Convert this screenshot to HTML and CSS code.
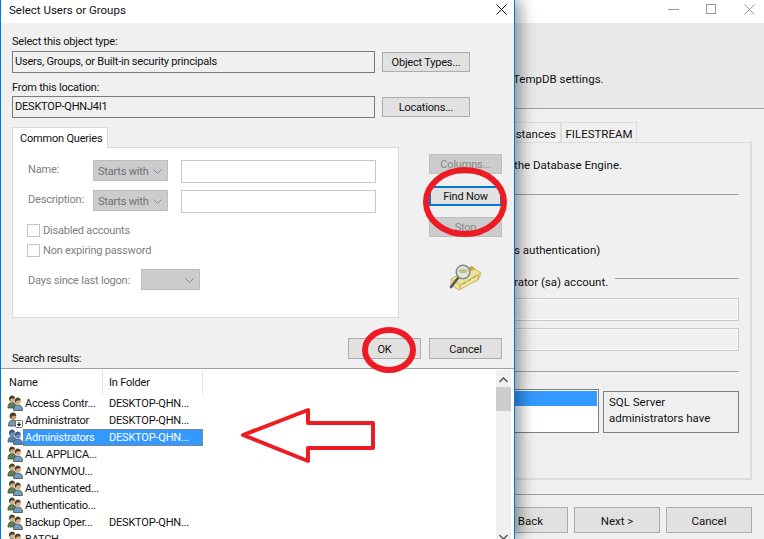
FILE: index.html
```html
<!DOCTYPE html>
<html lang="en">
<head>
    <meta charset="UTF-8">
    <meta name="viewport" content="width=device-width, initial-scale=1.0">
    <title>Select Users or Groups</title>
    <link rel="stylesheet" href="styles.css">
</head>
<body>

<svg class="defs" width="0" height="0">
    <symbol id="group" viewBox="0 0 16 16">
        <path d="M1 13c0-4 1.500-5.500 4-5.500s4 1.500 4 5.500z" fill="var(--back)" stroke="var(--line)" stroke-width=".8"/>
        <circle cx="5" cy="4.500" r="3" fill="var(--skin)"/>
        <path d="M2 4.500c0-3 1.500-4 3-4s3 1 3 3c-2 0-4 0-4.500 .5l-.5 2z" fill="var(--hair)"/>
        <path d="M6.500 15.500c0-4 1.500-5.500 4.300-5.500s4.700 1.500 4.700 5.500z" fill="var(--front)" stroke="var(--line)" stroke-width=".8"/>
        <circle cx="10.800" cy="6.500" r="3" fill="var(--skin)"/>
        <path d="M7.800 6.500c0-3 1.500-4 3-4s3 1 3 3c-2-.5-3.500 0-4.500 .5l-.5 2z" fill="var(--hair)"/>
    </symbol>
    <symbol id="user" viewBox="0 0 16 16">
        <path d="M1.500 14c0-4.500 2-6 4.500-6s4.500 1.500 4.500 6z" fill="#7d94ab" stroke="#3d4a58" stroke-width=".8"/>
        <circle cx="6" cy="4.500" r="3.300" fill="#c9986a"/>
        <path d="M2.700 5c0-3.500 1.700-4.500 3.300-4.500s3.300 1 3.300 3.500c-2-.5-3.500-.5-4.500 0l-.5 2.500z" fill="#4a3524"/>
        <rect x="8.500" y="8.500" width="7" height="7" rx="1" fill="#fff" stroke="#555" stroke-width=".8"/>
        <path d="M12 10v3.500M10.300 12l1.700 1.700 1.700-1.700" fill="none" stroke="#222" stroke-width="1.100"/>
    </symbol>
</svg>

<div class="screen">

    <!-- wizard window behind the dialog -->
    <div class="wizard">
        <div class="wizard-title">
            <svg class="win-ctl" width="11" height="11" viewBox="0 0 11 11"><path d="M0 5.500h11" stroke="#999"/></svg>
            <svg class="win-ctl" width="11" height="11" viewBox="0 0 11 11"><rect x=".5" y=".5" width="9" height="9" fill="none" stroke="#999"/></svg>
            <svg class="win-ctl" width="11" height="11" viewBox="0 0 11 11"><path d="M.5 .5l10 10M10.500 .5l-10 10" stroke="#999"/></svg>
        </div>
        <div class="wizard-head">TempDB settings.</div>
        <div class="wizard-main">
            <div class="wizard-tabs">
                <span class="wizard-tab tab-clipped">Instances</span>
                <span class="wizard-tab tab-stream">FILESTREAM</span>
            </div>
            <div class="wizard-panel">
                <p class="engine-text">the Database Engine.</p>
                <div class="rule rule-first"></div>
                <p class="auth-text">s authentication)</p>
                <div class="sa-line"><span>rator (sa) account.</span><div class="rule"></div></div>
                <div class="pw-box"></div>
                <div class="pw-box"></div>
                <div class="rule rule-admins"></div>
                <div class="admins">
                    <div class="admin-list"><div class="admin-selected"></div></div>
                    <div class="admin-note">SQL Server administrators have</div>
                </div>
            </div>
        </div>
        <div class="wizard-foot">
            <button class="btn wizard-btn back-btn">Back</button>
            <button class="btn wizard-btn">Next &gt;</button>
            <button class="btn wizard-btn">Cancel</button>
        </div>
    </div>

    <!-- the dialog -->
    <div class="dialog">
        <div class="dialog-title">
            <span>Select Users or Groups</span>
            <svg width="11" height="11" viewBox="0 0 11 11"><path d="M.5 .5l10 10M10.500 .5l-10 10" stroke="#111"/></svg>
        </div>

        <div class="dialog-body">
            <div class="caption">Select this object type:</div>
            <div class="field-row">
                <div class="field">Users, Groups, or Built-in security principals</div>
                <button class="btn field-btn">Object Types...</button>
            </div>
            <div class="caption caption-second">From this location:</div>
            <div class="field-row field-row-second">
                <div class="field">DESKTOP-QHNJ4I1</div>
                <button class="btn field-btn">Locations...</button>
            </div>

            <div class="queries">
                <div class="queries-left">
                    <div class="tab">Common Queries</div>
                    <div class="panel">
                        <div class="query-row">
                            <span class="query-label">Name:</span>
                            <div class="fake-select"><span>Starts with</span><svg class="chev" width="9" height="5" viewBox="0 0 9 5"><path d="M.5 .5l4 4 4-4" fill="none" stroke="#888"/></svg></div>
                            <div class="query-input"></div>
                        </div>
                        <div class="query-row query-row-second">
                            <span class="query-label">Description:</span>
                            <div class="fake-select"><span>Starts with</span><svg class="chev" width="9" height="5" viewBox="0 0 9 5"><path d="M.5 .5l4 4 4-4" fill="none" stroke="#888"/></svg></div>
                            <div class="query-input"></div>
                        </div>
                        <div class="check-row check-first"><span class="check"></span>Disabled accounts</div>
                        <div class="check-row"><span class="check"></span>Non expiring password</div>
                        <div class="days-row">
                            <span class="days-label">Days since last logon:</span>
                            <div class="fake-select days-select"><span></span><svg class="chev" width="9" height="5" viewBox="0 0 9 5"><path d="M.5 .5l4 4 4-4" fill="none" stroke="#888"/></svg></div>
                        </div>
                    </div>
                </div>
                <div class="queries-side">
                    <button class="btn side-btn btn-off">Columns...</button>
                    <button class="btn side-btn btn-focus">Find Now</button>
                    <button class="btn side-btn btn-off">Stop</button>
                    <svg class="find-icon" width="33" height="28" viewBox="0 0 33 28">
                        <path d="M2 15L23 3l9 6-3 7L10 26 2 21z" fill="#efe39a" stroke="#b5a862" stroke-width=".8"/>
                        <path d="M2 15l9 6 21-12" fill="none" stroke="#c9bb72"/>
                        <path d="M11 21v5M29 11v5" stroke="#b5a862"/>
                        <path d="M14 20l3-2M19 17l3-2M24 14l3-2" stroke="#9c8f50"/>
                        <path d="M18 4l5-2 3 3-6 3z" fill="#c9a73c"/>
                        <path d="M9 14L2 23" stroke="#555" stroke-width="2.600" stroke-linecap="round"/>
                        <circle cx="14" cy="8" r="6.800" fill="#dfe7dc" stroke="#7d8c99" stroke-width="1.500"/>
                        <path d="M9 7c3-3 7-3 10 0-2 3-7 3-10 0z" fill="#c5bd8b"/>
                    </svg>
                </div>
            </div>

            <div class="dialog-foot">
                <span class="results-label">Search results:</span>
                <div class="foot-btns">
                    <button class="btn side-btn foot-btn">OK</button>
                    <button class="btn side-btn foot-btn">Cancel</button>
                </div>
            </div>
        </div>

        <div class="results">
            <div class="results-table">
                <div class="col-heads">
                    <span class="col-head col-name">Name</span>
                    <span class="col-head col-folder">In Folder</span>
                </div>
                <div class="row"><svg class="icon"><use href="#group"/></svg><div class="cells"><span class="name">Access Contr...</span><span>DESKTOP-QHN...</span></div></div>
                <div class="row"><svg class="icon"><use href="#user"/></svg><div class="cells"><span class="name">Administrator</span><span>DESKTOP-QHN...</span></div></div>
                <div class="row row-selected"><svg class="icon"><use href="#group"/></svg><div class="cells"><span class="name">Administrators</span><span>DESKTOP-QHN...</span></div></div>
                <div class="row"><svg class="icon"><use href="#group"/></svg><div class="cells"><span class="name">ALL APPLICA...</span></div></div>
                <div class="row"><svg class="icon"><use href="#group"/></svg><div class="cells"><span class="name">ANONYMOU...</span></div></div>
                <div class="row"><svg class="icon"><use href="#group"/></svg><div class="cells"><span class="name">Authenticated...</span></div></div>
                <div class="row"><svg class="icon"><use href="#group"/></svg><div class="cells"><span class="name">Authenticatio...</span></div></div>
                <div class="row"><svg class="icon"><use href="#group"/></svg><div class="cells"><span class="name">Backup Oper...</span><span>DESKTOP-QHN...</span></div></div>
                <div class="row"><svg class="icon"><use href="#group"/></svg><div class="cells"><span class="name">BATCH</span></div></div>
            </div>
            <div class="scrollbar">
                <svg class="scroll-arrow" width="9" height="6" viewBox="0 0 9 6"><path d="M.5 5l4-4 4 4" fill="none" stroke="#555" stroke-width="1.500"/></svg>
                <div class="scroll-thumb"></div>
                <svg class="scroll-arrow scroll-down" width="9" height="6" viewBox="0 0 9 6"><path d="M.5 1l4 4 4-4" fill="none" stroke="#555" stroke-width="1.500"/></svg>
            </div>
        </div>
    </div>

    <!-- red marks drawn over the screenshot -->
    <svg class="marks" width="764" height="539" viewBox="0 0 764 539">
        <ellipse cx="465" cy="202" rx="39" ry="32" />
        <ellipse cx="389" cy="350" rx="24" ry="20" />
        <path class="arrow" d="M243 435L308 410v13h65v25h-65v13z" />
    </svg>
</div>

</body>
</html>
```

FILE: styles.css
```css
* {
    box-sizing: border-box;
}
html, body {
    margin: 0;
    padding: 0;
    background: #f0f0f0;
}
body {
    font-family: Roboto, "Open Sans", sans-serif;
    font-size: 11px;
    letter-spacing: -0.2px;
    color: #111;
}
.defs {
    position: absolute;
}
.screen {
    position: relative;
    width: 764px;
    height: 539px;
    overflow: hidden;
}
p {
    margin: 0;
}

/* shared button */
.btn {
    display: block;
    padding: 1px 0 0;
    font-family: inherit;
    font-size: 11px;
    letter-spacing: inherit;
    color: #111;
    background: #e1e1e1;
    border: 1px solid #adadad;
}
.btn-off {
    background: #cccccc;
    color: #8a8a8a;
    border-color: #bfbfbf;
}
.btn-focus {
    border: 2px solid #0078d7;
}

/* wizard behind */
.wizard {
    position: absolute;
    left: 500px;
    top: 0;
    width: 264px;
    height: 539px;
    background: #f0f0f0;
    font-size: 11.5px;
    letter-spacing: 0;
    display: flex;
    flex-direction: column;
}
.wizard-title {
    height: 23px;
    background: #fff;
    display: flex;
    justify-content: flex-end;
    align-items: flex-start;
    padding: 4px 9px 0 0;
    gap: 27px;
}
.wizard-head {
    height: 86px;
    background: #e9e9e9;
    border-bottom: 1px solid #a0a0a0;
    padding: 49px 0 0 13px;
    line-height: 15px;
}
.wizard-main {
    padding: 13px 12px 0 0;
    height: 386px;
    border-bottom: 1px solid #a0a0a0;
}
.wizard-tabs {
    display: flex;
    height: 20px;
}
.wizard-tab {
    display: flex;
    align-items: center;
    padding: 2px 4px 0;
    border: 1px solid #dcdcdc;
    border-bottom: none;
}
.tab-clipped {
    width: 61px;
    justify-content: flex-end;
}
.tab-stream {
    width: 76px;
    justify-content: center;
}
.wizard-panel {
    height: 338px;
    border: 1px solid #dcdcdc;
    border-right-width: 2px;
    border-bottom-width: 2px;
    padding: 15px 11px 0 13px;
}
.engine-text {
    line-height: 15px;
}
.rule {
    border-top: 1px solid #a0a0a0;
    flex: 1;
}
.rule-first {
    margin-top: 21px;
}
.auth-text {
    margin-top: 48px;
    line-height: 15px;
}
.sa-line {
    display: flex;
    align-items: center;
    gap: 7px;
    margin-top: 16px;
    height: 15px;
}
.sa-line .rule {
    margin-top: -6px;
}
.pw-box {
    height: 23px;
    margin-top: 7px;
    margin-left: -13px;
    border: 1px solid #cacaca;
    box-shadow: inset 0 0 0 1px #fafafa;
}
.sa-line + .pw-box {
    margin-top: 9px;
}
.rule-admins {
    margin: 20px 0 0 -13px;
}
.admins {
    display: flex;
    gap: 4px;
    margin: 17px 0 0 -13px;
}
.admin-list {
    width: 98px;
    height: 44px;
    background: #fff;
    border: 1px solid #808080;
    padding: 1px 1px 0 0;
}
.admin-selected {
    height: 15px;
    background: #3399ff;
}
.admin-note {
    width: 136px;
    height: 42px;
    margin-top: 2px;
    border: 1px solid #808080;
    padding: 2px 10px 2px 5px;
    line-height: 16px;
    overflow: hidden;
}
.wizard-foot {
    display: flex;
    justify-content: flex-end;
    gap: 6px;
    padding: 12px 12px 0 0;
}
.wizard-btn {
    width: 86px;
    height: 26px;
    flex: none;
    font-size: 11.5px;
}
.back-btn {
    width: 75px;
}

/* dialog */
.dialog {
    position: absolute;
    left: 0;
    top: 0;
    width: 515px;
    height: 539px;
    background: #f0f0f0;
    border-left: 1px solid #0078d7;
    border-right: 1px solid #0078d7;
    box-shadow: 6px 0 14px rgba(0, 0, 0, 0.38);
    display: flex;
    flex-direction: column;
}
.dialog-title {
    height: 23px;
    flex: none;
    background: #fff;
    display: flex;
    justify-content: space-between;
    padding: 2px 7px 0 8px;
    font-size: 11.5px;
    letter-spacing: 0;
    line-height: 16px;
}
.dialog-title svg {
    margin-top: 2px;
}
.dialog-body {
    height: 345px;
    flex: none;
    padding: 12px 12px 0 11px;
}
.caption {
    line-height: 14px;
}
.caption-second {
    margin-top: 8px;
}
.field-row {
    display: flex;
    align-items: center;
    gap: 7px;
    margin-top: 2px;
}
.field-row-second {
    margin-top: 1px;
}
.field {
    width: 363px;
    height: 22px;
    padding: 0 2px;
    line-height: 20px;
    border: 1px solid #7a7a7a;
}
.field-btn {
    width: 88px;
    height: 20px;
}

.queries {
    display: flex;
    margin-top: 9px;
}
.tab {
    position: relative;
    width: 96px;
    height: 21px;
    margin-bottom: -1px;
    padding-left: 7px;
    line-height: 22px;
    white-space: nowrap;
    background: #fff;
    border: 1px solid #d9d9d9;
    border-bottom: none;
}
.panel {
    width: 387px;
    height: 171px;
    background: #fff;
    border: 1px solid #d9d9d9;
    padding: 12px 0 0 15px;
    color: #808080;
}
.query-row {
    display: flex;
    align-items: flex-start;
}
.query-row-second {
    margin-top: 7px;
}
.query-label {
    width: 65px;
    line-height: 19px;
}
.fake-select {
    display: flex;
    align-items: center;
    justify-content: space-between;
    width: 75px;
    height: 21px;
    padding: 1px 5px 0 4px;
    white-space: nowrap;
    background: #cccccc;
    border: 1px solid #bdbdbd;
    color: #707070;
}
.query-input {
    width: 195px;
    height: 23px;
    margin-left: 13px;
    border: 1px solid #c8c8c8;
}
.check-row {
    display: flex;
    align-items: center;
    height: 20px;
}
.check-first {
    margin-top: 7px;
}
.check {
    width: 13px;
    height: 13px;
    margin: 0 3px 0 -1px;
    border: 1px solid #c4c4c4;
    background: #fff;
}
.days-row {
    display: flex;
    align-items: center;
    margin-top: 9px;
}
.days-label {
    width: 113px;
    padding-top: 2px;
}
.days-select {
    width: 59px;
}

.queries-side {
    display: flex;
    flex-direction: column;
    margin-left: 30px;
    padding-top: 27px;
}
.side-btn {
    width: 73px;
    height: 20px;
    flex: none;
}
.side-btn + .side-btn {
    margin-top: 12px;
}
.btn-focus + .btn-off {
    margin-top: 11px;
}
.find-icon {
    margin: 27px 0 0 20px;
}
.dialog-foot {
    display: flex;
    justify-content: space-between;
    align-items: flex-end;
    margin-top: 20px;
    height: 28px;
}
.results-label {
    line-height: 14px;
}
.foot-btns {
    display: flex;
    gap: 8px;
    align-self: flex-start;
}
.foot-btn {
    height: 21px;
}
.side-btn.foot-btn + .side-btn.foot-btn {
    margin-top: 0;
}

/* results list */
.results {
    flex: 1;
    min-height: 0;
    display: flex;
    background: #fff;
    border-top: 1px solid #a0a0a0;
    padding-top: 1px;
    overflow: hidden;
}
.results-table {
    width: 495px;
}
.col-heads {
    display: flex;
    height: 25px;
}
.col-head {
    height: 24px;
    line-height: 26px;
    padding-left: 8px;
    border-right: 1px solid #e5e5e5;
}
.col-name {
    width: 102px;
}
.col-folder {
    width: 100px;
    padding-left: 6px;
}
.row {
    display: flex;
    height: 17px;
    padding-left: 6px;
    --back: #5f7d4c;
    --front: #6f9cc0;
    --skin: #d8b088;
    --hair: #4f4028;
    --line: #3f4f45;
}
.icon {
    width: 16px;
    height: 16px;
    flex: none;
}
.cells {
    display: flex;
    width: 180px;
    padding-left: 2px;
    line-height: 18px;
    white-space: nowrap;
}
.name {
    width: 84px;
    flex: none;
}
.row-selected {
    --back: #5c7fa8;
    --front: #4f86c6;
    --skin: #6f8fb0;
    --hair: #3e5a80;
    --line: #3e5a80;
}
.row-selected .cells {
    background: #3399ff;
    color: #fff;
    outline: 1px dotted #c8701e;
    outline-offset: -1px;
}
.scrollbar {
    position: relative;
    width: 15px;
    background: #f0f0f0;
}
.scroll-arrow {
    display: block;
    margin: 7px auto 0;
}
.scroll-thumb {
    height: 24px;
    margin-top: 4px;
    background: #cdcdcd;
}
.scroll-down {
    position: absolute;
    left: 3px;
    bottom: -1px;
}

/* annotation layer */
.marks {
    position: absolute;
    left: 0;
    top: 0;
    pointer-events: none;
}
.marks ellipse {
    fill: none;
    stroke: #ed1c24;
    stroke-width: 6;
}
.marks .arrow {
    fill: none;
    stroke: #ed1c24;
    stroke-width: 4;
    stroke-linejoin: round;
}
```
